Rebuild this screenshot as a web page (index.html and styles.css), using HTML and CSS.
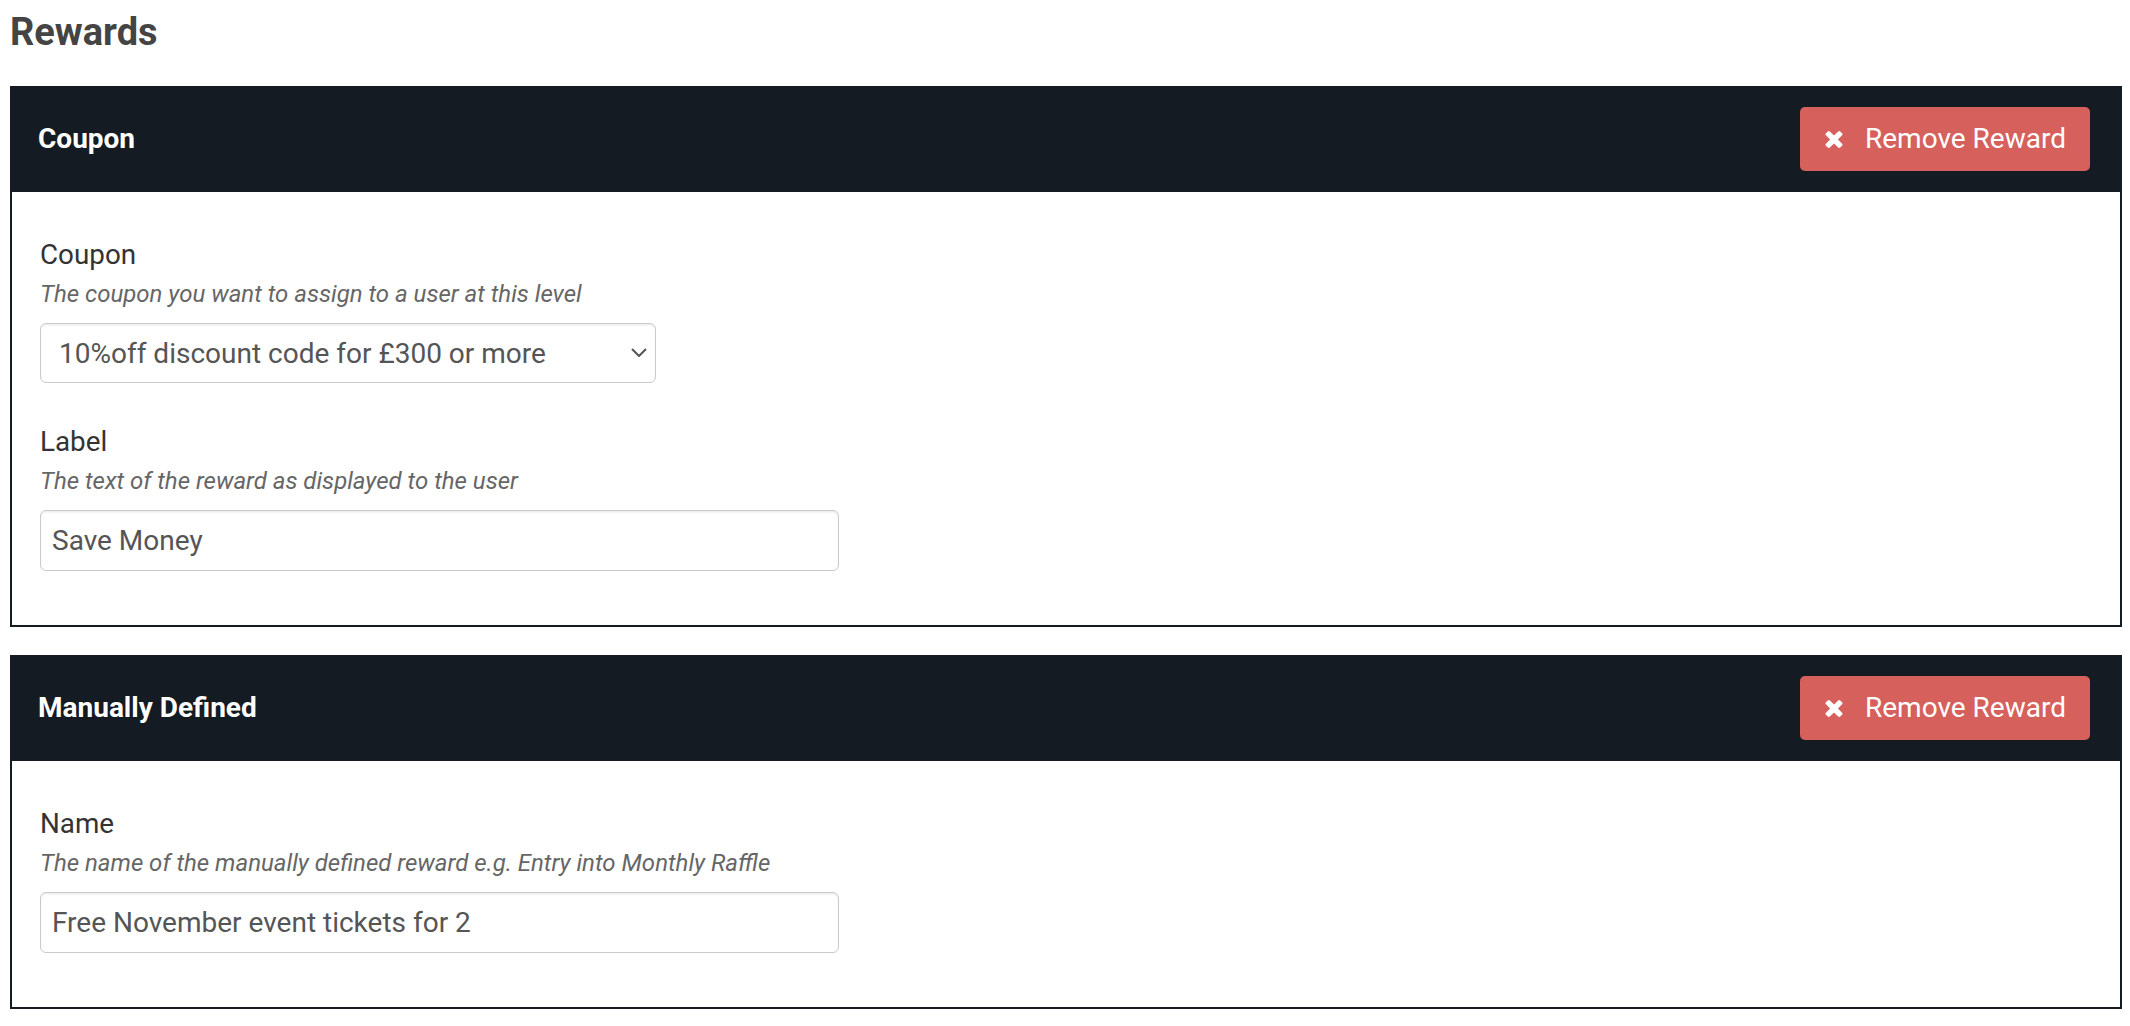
FILE: index.html
```html
<!DOCTYPE html>
<html lang="en">
<head>
<meta charset="utf-8">
<title>Rewards</title>
<link rel="stylesheet" href="styles.css">
</head>
<body>
<div class="page">
  <h1 class="page-title">Rewards</h1>

  <section class="reward">
    <header class="reward-head">
      <h2 class="reward-title">Coupon</h2>
      <button class="btn-remove" type="button">
        <svg class="btn-icon" viewBox="110 366 1188 1188" aria-hidden="true"><path d="M1298 1322q0 40-28 68l-136 136q-28 28-68 28t-68-28l-294-294-294 294q-28 28-68 28t-68-28l-136-136q-28-28-28-68t28-68l294-294-294-294q-28-28-28-68t28-68l136-136q28-28 68-28t68 28l294 294 294-294q28-28 68-28t68 28l136 136q28 28 28 68t-28 68l-294 294 294 294q28 28 28 68z"/></svg>
        <span>Remove Reward</span>
      </button>
    </header>
    <div class="reward-body">
      <div class="field">
        <label class="field-label">Coupon</label>
        <p class="field-help">The coupon you want to assign to a user at this level</p>
        <div class="select-wrap">
          <select class="control control-select">
            <option>10%off discount code for £300 or more</option>
          </select>
          <svg class="select-caret" viewBox="0 0 16 9" aria-hidden="true"><polyline points="1,1 8,8 15,1"/></svg>
        </div>
      </div>
      <div class="field">
        <label class="field-label">Label</label>
        <p class="field-help">The text of the reward as displayed to the user</p>
        <input class="control control-text" type="text" value="Save Money">
      </div>
    </div>
  </section>

  <section class="reward">
    <header class="reward-head">
      <h2 class="reward-title">Manually Defined</h2>
      <button class="btn-remove" type="button">
        <svg class="btn-icon" viewBox="110 366 1188 1188" aria-hidden="true"><path d="M1298 1322q0 40-28 68l-136 136q-28 28-68 28t-68-28l-294-294-294 294q-28 28-68 28t-68-28l-136-136q-28-28-28-68t28-68l294-294-294-294q-28-28-28-68t28-68l136-136q28-28 68-28t68 28l294 294 294-294q28-28 68-28t68 28l136 136q28 28 28 68t-28 68l-294 294 294 294q28 28 28 68z"/></svg>
        <span>Remove Reward</span>
      </button>
    </header>
    <div class="reward-body">
      <div class="field">
        <label class="field-label">Name</label>
        <p class="field-help">The name of the manually defined reward e.g. Entry into Monthly Raffle</p>
        <input class="control control-text" type="text" value="Free November event tickets for 2">
      </div>
    </div>
  </section>
</div>
</body>
</html>
```

FILE: styles.css
```css
* { box-sizing: border-box; }

html, body {
  margin: 0;
  padding: 0;
  background: #ffffff;
}

body {
  font-family: Roboto, "Liberation Sans", Arial, sans-serif;
  color: #333333;
}

.page {
  padding: 10px 8px 0 10px;
}

.page-title {
  margin: 0 0 32px 0;
  font-size: 38px;
  line-height: 44px;
  font-weight: 700;
  color: #444444;
}

.reward {
  border: 2px solid #141b22;
  margin-bottom: 28px;
  background: #ffffff;
}

.reward-head {
  display: flex;
  align-items: center;
  justify-content: space-between;
  background: #141b22;
  padding: 19px 30px 21px 26px;
}

.reward-title {
  margin: 0;
  font-size: 28px;
  font-weight: 700;
  color: #ffffff;
  line-height: 32px;
}

.btn-remove {
  display: flex;
  align-items: center;
  gap: 22px;
  height: 64px;
  padding: 0 24px 0 25px;
  border: 0;
  border-radius: 5px;
  background: #d6605c;
  color: #ffffff;
  font-family: Roboto, "Liberation Sans", Arial, sans-serif;
  font-size: 28px;
  line-height: 32px;
  cursor: pointer;
}

.btn-icon {
  width: 18px;
  height: 17px;
  fill: #ffffff;
  flex: none;
}

.reward-body {
  display: flex;
  flex-direction: column;
  gap: 43px;
  padding: 47px 28px 54px 28px;
}

.field {
  display: flex;
  flex-direction: column;
  align-items: flex-start;
}

.field-label {
  display: block;
  font-size: 27.8px;
  line-height: 32px;
  color: #333333;
  margin: 0 0 10px 0;
}

.field-help {
  margin: 0 0 16px 0;
  font-size: 24px;
  line-height: 26px;
  font-style: italic;
  color: #666666;
}

.control {
  height: 60px;
  border: 1.5px solid #cacaca;
  border-radius: 6px;
  box-shadow: inset 0 1.5px 1.5px rgba(0, 0, 0, 0.075);
  background: #ffffff;
  font-family: Roboto, "Liberation Sans", Arial, sans-serif;
  font-size: 28px;
  color: #555555;
  outline: none;
}

.select-wrap {
  position: relative;
  width: 616px;
}

.control-select {
  width: 100%;
  appearance: none;
  -webkit-appearance: none;
  padding: 0 50px 0 18px;
}

.select-caret {
  position: absolute;
  right: 9px;
  top: 25px;
  width: 16px;
  height: 9px;
  fill: none;
  stroke: #555555;
  stroke-width: 2;
  pointer-events: none;
}

.control-text {
  width: 799px;
  height: 61px;
  padding: 0 11px;
}
```
